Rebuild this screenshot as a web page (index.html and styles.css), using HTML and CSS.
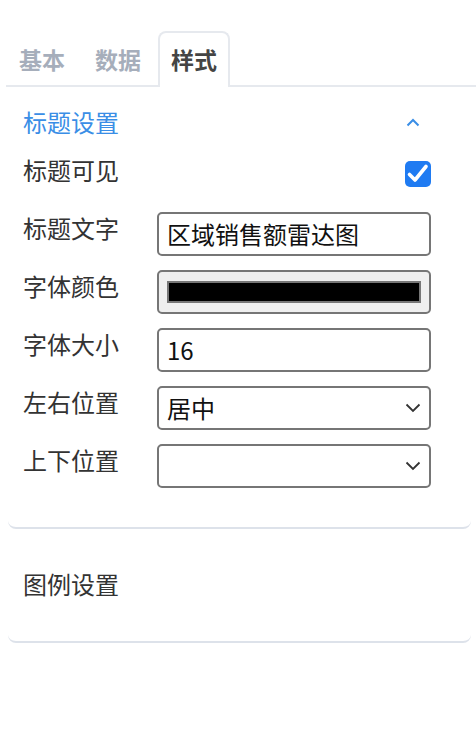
FILE: index.html
```html
<!DOCTYPE html>
<html lang="zh-CN">
<head>
<meta charset="utf-8">
<title>样式设置</title>
<link rel="stylesheet" href="styles.css">
</head>
<body>
<div class="panel">
  <div class="tabs">
    <div class="tab">基本</div>
    <div class="tab">数据</div>
    <div class="tab active">样式</div>
  </div>
  <div class="cards">
    <section class="card">
      <div class="card-head open">
        <span>标题设置</span>
        <svg class="chev-up" width="14" height="9" viewBox="0 0 14 9"><path d="M1.5 7.5 L7 2 L12.5 7.5" fill="none" stroke="#3a8ee6" stroke-width="2"/></svg>
      </div>
      <div class="form">
        <div class="row">
          <label class="lbl">标题可见</label>
          <div class="ctl ctl-check">
            <span class="check"><svg width="26" height="26" viewBox="0 0 26 26"><path d="M4.5 13.5 L10 19 L21 5.5" fill="none" stroke="#fff" stroke-width="3.6" stroke-linecap="round" stroke-linejoin="round"/></svg></span>
          </div>
        </div>
        <div class="row">
          <label class="lbl">标题文字</label>
          <div class="ctl field">区域销售额雷达图</div>
        </div>
        <div class="row">
          <label class="lbl">字体颜色</label>
          <div class="ctl field color"><span class="swatch"></span></div>
        </div>
        <div class="row">
          <label class="lbl">字体大小</label>
          <div class="ctl field">16</div>
        </div>
        <div class="row">
          <label class="lbl">左右位置</label>
          <div class="ctl field select"><span>居中</span><svg width="16" height="10" viewBox="0 0 16 10"><path d="M1.5 1.5 L8 8 L14.5 1.5" fill="none" stroke="#333" stroke-width="1.8"/></svg></div>
        </div>
        <div class="row">
          <label class="lbl">上下位置</label>
          <div class="ctl field select"><span></span><svg width="16" height="10" viewBox="0 0 16 10"><path d="M1.5 1.5 L8 8 L14.5 1.5" fill="none" stroke="#333" stroke-width="1.8"/></svg></div>
        </div>
      </div>
    </section>
    <section class="card card2">
      <div class="card-head"><span>图例设置</span></div>
    </section>
  </div>
</div>
</body>
</html>
```

FILE: styles.css
```css
* { box-sizing: border-box; }
html, body { margin: 0; padding: 0; background: #fff; }
body {
  font-family: "Noto Sans CJK SC", "Noto Sans", sans-serif;
  color: #333;
  font-size: 24px;
}
.panel { padding-top: 31px; }
.tabs {
  display: flex;
  gap: 4px;
  margin-left: 6px;
  border-bottom: 2px solid #e6e9ee;
}
.tab {
  padding: 0 11px 2px;
  font-size: 23px;
  line-height: 52px;
  border: 2px solid transparent;
  border-bottom: none;
  border-radius: 8px 8px 0 0;
  margin-bottom: -2px;
  font-weight: 700;
  color: #a6aebb;
  background: transparent;
}
.tab.active {
  color: #444;
  border-color: #e6e9ee;
  background: #fff;
}
.cards { padding: 0 5px 0 8px; }
.card {
  border-bottom: 2px solid #dde2ea;
  border-radius: 0 0 8px 8px;
  padding: 19px 40px 39px 15px;
}
.card2 { padding-top: 39px; padding-bottom: 41px; }
.card-head {
  display: flex;
  justify-content: space-between;
  align-items: center;
  line-height: 32px;
  color: #333;
}
.card-head.open { color: #3a8ee6; }
.chev-up { margin-right: 11px; }
.form {
  display: flex;
  flex-direction: column;
  gap: 14px;
  margin-top: 16px;
}
.row {
  display: flex;
  align-items: flex-start;
  height: 44px;
}
.lbl {
  width: 134px;
  line-height: 32px;
  flex: none;
}
.ctl { flex: 1; height: 44px; }
.ctl-check { display: flex; justify-content: flex-end; }
.check {
  margin-top: 7px;
  width: 26px;
  height: 26px;
  border-radius: 5px;
  background: #1f7bf2;
  display: block;
}
.check svg { display: block; }
.field {
  border: 2px solid #767676;
  border-radius: 5px;
  padding: 0 8px;
  line-height: 40px;
  color: #111;
  display: flex;
  align-items: center;
  overflow: hidden;
  white-space: nowrap;
}
.field.color {
  background: #efefef;
  padding: 0 8px;
}
.swatch {
  display: block;
  width: 100%;
  height: 22px;
  margin-top: -1px;
  background: #000;
  border: 2px solid #777;
}
.select { justify-content: space-between; padding-right: 8px; }
.select svg { flex: none; }
```
